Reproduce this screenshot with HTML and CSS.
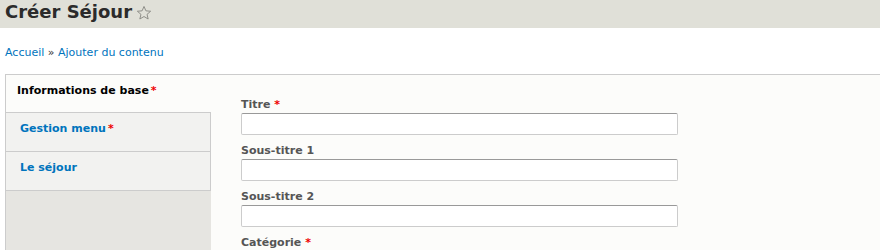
FILE: index.html
```html
<!DOCTYPE html>
<html lang="fr">
<head>
<meta charset="utf-8">
<link rel="stylesheet" href="styles.css">
</head>
<body>
<header class="page-header">
  <h1 class="page-title">Créer Séjour <svg class="star" width="16" height="16" viewBox="0 0 20 20"><path d="M10 1.8l2.4 5.5 5.9.5-4.5 3.9 1.4 5.8L10 14.4l-5.2 3.1 1.4-5.8L1.7 7.8l5.9-.5z" fill="none" stroke="#8a8a85" stroke-width="1.2" stroke-linejoin="round"/></svg></h1>
</header>
<nav class="breadcrumb"><a href="#">Accueil</a> » <a href="#">Ajouter du contenu</a></nav>
<div class="vtabs">
  <ul class="vtabs-list">
    <li class="vtab selected"><a href="#">Informations de base<span class="req">*</span></a></li>
    <li class="vtab"><a href="#">Gestion menu<span class="req">*</span></a></li>
    <li class="vtab"><a href="#">Le séjour</a></li>
  </ul>
  <div class="vtabs-pane">
    <div class="field">
      <label>Titre <span class="req">*</span></label>
      <input type="text" class="text">
    </div>
    <div class="field">
      <label>Sous-titre 1</label>
      <input type="text" class="text">
    </div>
    <div class="field">
      <label>Sous-titre 2</label>
      <input type="text" class="text">
    </div>
    <div class="field">
      <label>Catégorie <span class="req">*</span></label>
    </div>
  </div>
</div>
</body>
</html>
```
FILE: styles.css
```css
html, body {
  margin: 0;
  padding: 0;
  background: #ffffff;
  font-family: "DejaVu Sans", Verdana, sans-serif;
  color: #333;
}
.page-header {
  background: #e0e0d8;
  height: 28px;
  overflow: hidden;
  padding: 0 5px;
}
.page-title {
  margin: 0;
  padding-top: 1px;
  font-size: 18px;
  font-weight: bold;
  line-height: 22px;
  color: #2b2b2b;
  display: flex;
  align-items: center;
  gap: 4px;
}
.star {
  margin-top: 1px;
}
.breadcrumb {
  font-size: 11px;
  padding: 18px 5px 0;
  height: 28px;
  color: #333;
}
.breadcrumb a {
  color: #0074bd;
  text-decoration: none;
}
.vtabs {
  display: flex;
  margin-left: 5px;
  border-top: 1px solid #ccc;
  height: 176px;
  overflow: hidden;
}
.vtabs-list {
  list-style: none;
  margin: 0;
  padding: 0;
  width: 205px;
  flex: none;
  background: #e6e5e1;
  border-left: 1px solid #ccc;
}
.vtab {
  border-bottom: 1px solid #ccc;
  border-right: 1px solid #ccc;
  background: #f2f2f0;
  box-sizing: border-box;
  height: 39px;
}
.vtab.selected {
  height: 38px;
}
.vtab a {
  display: block;
  padding: 9px 0 0 14px;
  font-size: 11px;
  font-weight: bold;
  color: #0074bd;
  text-decoration: none;
}
.vtab.selected {
  background: #fcfcfa;
  border-right: none;
}
.vtab.selected a {
  color: #000;
  padding-left: 11px;
}
.req {
  color: #e00;
  margin-left: 2px;
}
.field label .req {
  margin-left: 0;
}
.vtabs-pane {
  flex: 1;
  background: #fcfcfa;
  padding: 23px 0 0 30px;
}
.field {
  margin-bottom: 9px;
}
.field label {
  display: block;
  font-size: 11px;
  font-weight: bold;
  color: #555;
  margin-bottom: 2px;
}
.text {
  display: block;
  box-sizing: border-box;
  width: 437px;
  height: 22px;
  margin: 0;
  border: 1px solid #ccc;
  border-top-color: #999;
  border-radius: 2px;
  background: #fff;
}
```
